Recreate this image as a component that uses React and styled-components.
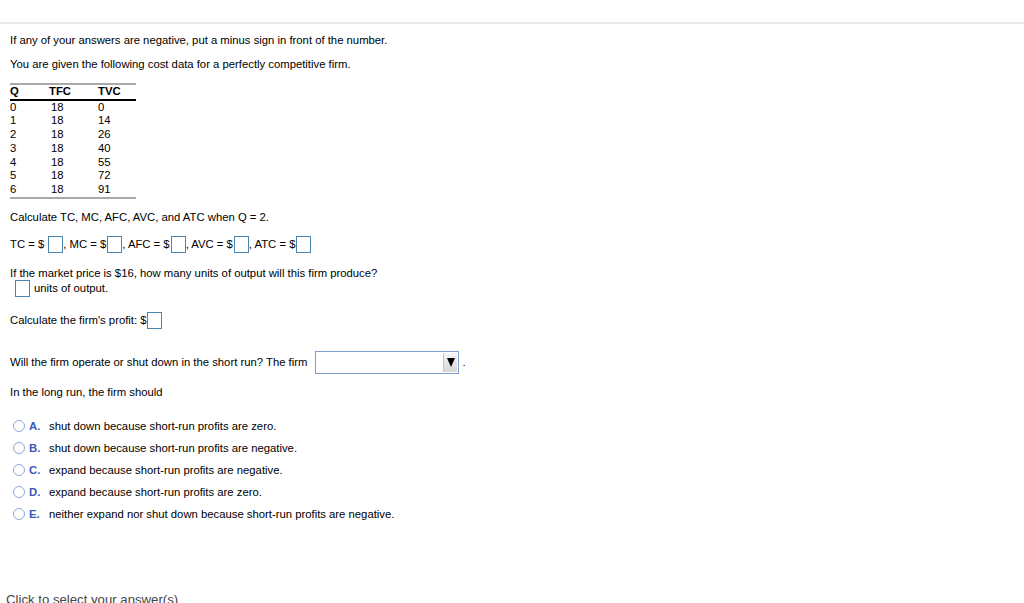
import styled, { createGlobalStyle } from "styled-components";

const GlobalStyle = createGlobalStyle`
  html, body {
    margin: 0;
    padding: 0;
    background: #ffffff;
  }
  body {
    font-family: "Liberation Sans", Arial, Helvetica, sans-serif;
    font-size: 11.3px;
    color: #000000;
  }
`;

const Page = styled.div`
  width: 1024px;
  height: 603px;
  overflow: hidden;
  position: relative;
`;

const TopBar = styled.div`
  height: 22px;
  border-bottom: 2px solid #e7e7ec;
`;

const Content = styled.div`
  padding: 0 10px;
`;

const Line = styled.p`
  margin: ${(p) => p.$top || 0}px 0 0 0;
  line-height: 14px;
  white-space: nowrap;
  display: flex;
  align-items: center;
`;

const Table = styled.table`
  margin-top: 12px;
  border-collapse: collapse;
  border-top: 2px solid #a9a9a9;
  border-bottom: 2px solid #a9a9a9;
  width: 126px;
  line-height: 13.7px;
`;

const HeadCell = styled.th`
  text-align: left;
  font-weight: bold;
  padding: 0;
  height: 12px;
  border-bottom: 2px solid #000;
  width: ${(p) => p.$w}px;
`;

const Cell = styled.td`
  padding: 0;
  padding-left: ${(p) => p.$pad || 0}px;
`;

const Box = styled.span`
  display: inline-block;
  width: 13px;
  height: 15px;
  border: 1px solid #4a87b0;
  background: #fff;
  margin: 0 ${(p) => p.$right || 0}px 0 ${(p) => p.$left || 0}px;
`;

const Select = styled.span`
  display: inline-flex;
  justify-content: flex-end;
  align-items: stretch;
  width: 140px;
  height: 19px;
  border: 1px solid #7f9dc9;
  margin-left: 8px;
  margin-right: 3px;
  padding: 1px;
`;

const SelectButton = styled.span`
  width: 13px;
  background: linear-gradient(#f6f6f6, #d6d6d6);
  border-left: 1px solid #c4c4c4;
  display: flex;
  align-items: center;
  justify-content: center;
`;

const Options = styled.div`
  margin-top: 20px;
  display: flex;
  flex-direction: column;
  gap: 8px;
`;

const Option = styled.div`
  display: flex;
  align-items: center;
  height: 14px;
  padding-left: 3px;
  white-space: nowrap;
`;

const Radio = styled.span`
  width: 10px;
  height: 10px;
  border-radius: 50%;
  border: 1px solid #8ea6d8;
  background: #fff;
  margin-right: 4px;
`;

const Letter = styled.span`
  width: 20px;
  color: #3a58b8;
  font-weight: bold;
`;

const Footer = styled.div`
  position: absolute;
  left: 6px;
  top: 592px;
  font-size: 13.2px;
  color: #444444;
  white-space: nowrap;
`;

const rows = [
  [0, 18, 0],
  [1, 18, 14],
  [2, 18, 26],
  [3, 18, 40],
  [4, 18, 55],
  [5, 18, 72],
  [6, 18, 91],
];

const options = [
  ["A.", "shut down because short-run profits are zero."],
  ["B.", "shut down because short-run profits are negative."],
  ["C.", "expand because short-run profits are negative."],
  ["D.", "expand because short-run profits are zero."],
  ["E.", "neither expand nor shut down because short-run profits are negative."],
];

const App = () => {
  return (
    <Page>
      <GlobalStyle />
      <TopBar />
      <Content>
        <Line $top={9}>If any of your answers are negative, put a minus sign in front of the number.</Line>
        <Line $top={10}>You are given the following cost data for a perfectly competitive firm.</Line>
        <Table>
          <thead>
            <tr>
              <HeadCell $w={39}>Q</HeadCell>
              <HeadCell $w={49}>TFC</HeadCell>
              <HeadCell $w={38}>TVC</HeadCell>
            </tr>
          </thead>
          <tbody>
            {rows.map((r) => (
              <tr key={r[0]}>
                <Cell>{r[0]}</Cell>
                <Cell $pad={2}>{r[1]}</Cell>
                <Cell>{r[2]}</Cell>
              </tr>
            ))}
          </tbody>
        </Table>
        <Line $top={11}>Calculate TC, MC, AFC, AVC, and ATC when Q = 2.</Line>
        <Line $top={12}>
          TC = $<Box $left={4} />, MC = $<Box $left={1} />, AFC = $<Box $left={1} />, AVC = $<Box $left={1} />, ATC = $<Box $left={1} />
        </Line>
        <Line $top={13}>If the market price is $16, how many units of output will this firm produce?</Line>
        <Line $top={0}>
          <Box $left={5} $right={4} />units of output.
        </Line>
        <Line $top={15}>
          Calculate the firm's profit: $<Box />
        </Line>
        <Line $top={22}>
          Will the firm operate or shut down in the short run? The firm
          <Select>
            <SelectButton>
              <svg width="8" height="9" viewBox="0 0 8 9">
                <polygon points="0,0 8,0 4,9" fill="#000" />
              </svg>
            </SelectButton>
          </Select>
          .
        </Line>
        <Line $top={11}>In the long run, the firm should</Line>
        <Options>
          {options.map(([l, t]) => (
            <Option key={l}>
              <Radio />
              <Letter>{l}</Letter>
              {t}
            </Option>
          ))}
        </Options>
      </Content>
      <Footer>Click to select your answer(s)</Footer>
    </Page>
  );
};

export default App;
